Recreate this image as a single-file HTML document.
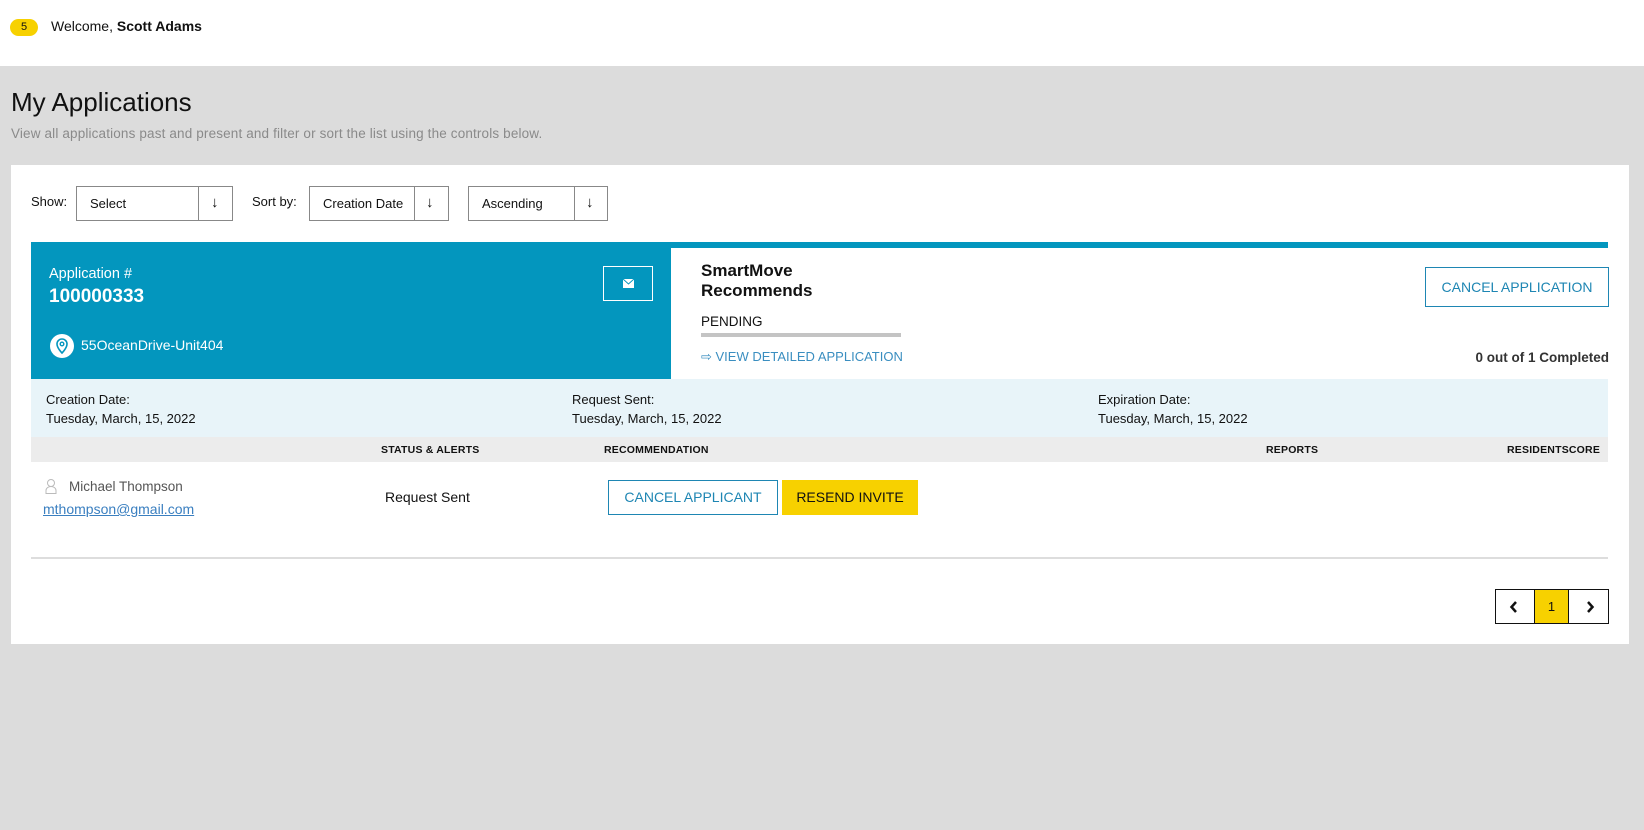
<!DOCTYPE html>
<html><head><meta charset="utf-8"><style>
*{box-sizing:border-box;margin:0;padding:0}
body{width:1644px;height:830px;background:#dcdcdc;font-family:"Liberation Sans",sans-serif;color:#111;position:relative;overflow:hidden}
.a{position:absolute}
.hdr{left:0;top:0;width:1644px;height:66px;background:#fff}
.box{border:1px solid #888;background:#fff;height:35px;font-size:13px}
.box span{position:absolute;left:13px;top:9px}
.box i{position:absolute;top:0;bottom:0;width:1px;background:#888}
.box b{position:absolute;top:7px;font-size:15px}
.sm{font-size:13px}
.th{font-size:10.5px;font-weight:bold;letter-spacing:.2px}
</style></head><body>
<div class="a hdr"></div>
<div class="a" style="left:10px;top:19px;width:28px;height:17px;border-radius:9px;background:#f7d100;font-size:11px;text-align:center;line-height:17px">5</div>
<div class="a" style="left:51px;top:18px;font-size:14px">Welcome, <b>Scott Adams</b></div>
<div class="a" style="left:11px;top:87px;font-size:26px">My Applications</div>
<div class="a" style="left:11px;top:126px;font-size:13.5px;color:#8a8a8a;letter-spacing:.15px">View all applications past and present and filter or sort the list using the controls below.</div>
<div class="a" style="left:11px;top:165px;width:1618px;height:479px;background:#fff"></div>

<div class="a" style="left:31px;top:194px;font-size:13px">Show:</div>
<div class="a box" style="left:76px;top:186px;width:157px"><span>Select</span><i style="left:121px"></i><b style="left:134px">↓</b></div>
<div class="a" style="left:252px;top:194px;font-size:13px">Sort by:</div>
<div class="a box" style="left:309px;top:186px;width:140px"><span>Creation Date</span><i style="left:104px"></i><b style="left:116px">↓</b></div>
<div class="a box" style="left:468px;top:186px;width:140px"><span>Ascending</span><i style="left:105px"></i><b style="left:117px">↓</b></div>

<div class="a" style="left:31px;top:242px;width:1577px;height:6px;background:#0396be"></div>
<div class="a" style="left:31px;top:242px;width:640px;height:137px;background:#0396be;color:#fff">
 <div class="a" style="left:18px;top:24px;font-size:14.5px">Application #</div>
 <div class="a" style="left:18px;top:44px;font-size:19px;font-weight:bold">100000333</div>
 <div class="a" style="left:572px;top:24px;width:50px;height:35px;border:1px solid #fff"><svg class="a" style="left:19px;top:12px" width="11" height="9" viewBox="0 0 11 9"><rect width="11" height="9" fill="#fff"/><path d="M0 0L5.5 5L11 0" stroke="#0396be" fill="none"/></svg></div>
 <svg class="a" style="left:19px;top:92px" width="24" height="24" viewBox="0 0 24 24"><circle cx="12" cy="12" r="12" fill="#fff"/><path d="M12 5a5 5 0 0 0-5 5c0 4 5 9 5 9s5-5 5-9a5 5 0 0 0-5-5z" fill="none" stroke="#0396be" stroke-width="1.6"/><circle cx="12" cy="10" r="1.8" fill="none" stroke="#0396be" stroke-width="1.4"/></svg>
 <div class="a" style="left:50px;top:95px;font-size:14px">55OceanDrive-Unit404</div>
</div>
<div class="a" style="left:701px;top:261px;font-size:17px;font-weight:bold;line-height:20px">SmartMove<br>Recommends</div>
<div class="a" style="left:701px;top:314px;font-size:13.5px">PENDING</div>
<div class="a" style="left:701px;top:333px;width:200px;height:4px;background:#c4c4c4"></div>
<div class="a" style="left:701px;top:349px;font-size:13px;color:#3a8ec0">⇨ VIEW DETAILED APPLICATION</div>
<div class="a" style="left:1425px;top:267px;width:184px;height:40px;border:1px solid #1e86b3;color:#1e86b3;font-size:14px;text-align:center;line-height:38px">CANCEL APPLICATION</div>
<div class="a" style="right:35px;top:350px;font-size:13.5px;color:#333;font-weight:bold">0 out of 1 Completed</div>

<div class="a" style="left:31px;top:379px;width:1577px;height:58px;background:#e8f4f9"></div>
<div class="a sm" style="left:46px;top:390px;line-height:19px">Creation Date:<br>Tuesday, March, 15, 2022</div>
<div class="a sm" style="left:572px;top:390px;line-height:19px">Request Sent:<br>Tuesday, March, 15, 2022</div>
<div class="a sm" style="left:1098px;top:390px;line-height:19px">Expiration Date:<br>Tuesday, March, 15, 2022</div>
<div class="a" style="left:31px;top:437px;width:1577px;height:25px;background:#ececec"></div>
<div class="a th" style="left:381px;top:444px">STATUS &amp; ALERTS</div>
<div class="a th" style="left:604px;top:444px">RECOMMENDATION</div>
<div class="a th" style="left:1266px;top:444px">REPORTS</div>
<div class="a th" style="left:1507px;top:444px">RESIDENTSCORE</div>

<svg class="a" style="left:45px;top:478px" width="12" height="16" viewBox="0 0 12 16"><circle cx="6" cy="5" r="3.5" fill="none" stroke="#bbb"/><path d="M1 15.5v-3a5 4 0 0 1 10 0v3z" fill="none" stroke="#bbb"/></svg>
<div class="a" style="left:69px;top:479px;color:#555;font-size:13.5px">Michael Thompson</div>
<div class="a" style="left:43px;top:501px;color:#3a7fc0;text-decoration:underline;font-size:14px">mthompson@gmail.com</div>
<div class="a" style="left:385px;top:489px;font-size:14px">Request Sent</div>
<div class="a" style="left:608px;top:480px;width:170px;height:35px;border:1px solid #1e86b3;color:#1e86b3;font-size:14px;text-align:center;line-height:33px">CANCEL APPLICANT</div>
<div class="a" style="left:782px;top:480px;width:136px;height:35px;background:#f7d100;font-size:14px;text-align:center;line-height:35px">RESEND INVITE</div>
<div class="a" style="left:31px;top:557px;width:1577px;height:2px;background:#ddd"></div>

<div class="a" style="left:1495px;top:589px;width:114px;height:35px;border:1px solid #111;background:#fff"></div>
<div class="a" style="left:1534px;top:589px;width:35px;height:35px;border:1px solid #111;background:#f7d100;font-size:13px;text-align:center;line-height:33px">1</div>
<svg class="a" style="left:1509px;top:600px" width="10" height="14" viewBox="0 0 10 14"><path d="M7 2L2.5 7L7 12" stroke="#111" stroke-width="2.5" fill="none"/></svg>
<svg class="a" style="left:1585px;top:600px" width="10" height="14" viewBox="0 0 10 14"><path d="M3 2L7.5 7L3 12" stroke="#111" stroke-width="2.5" fill="none"/></svg>
</body></html>
